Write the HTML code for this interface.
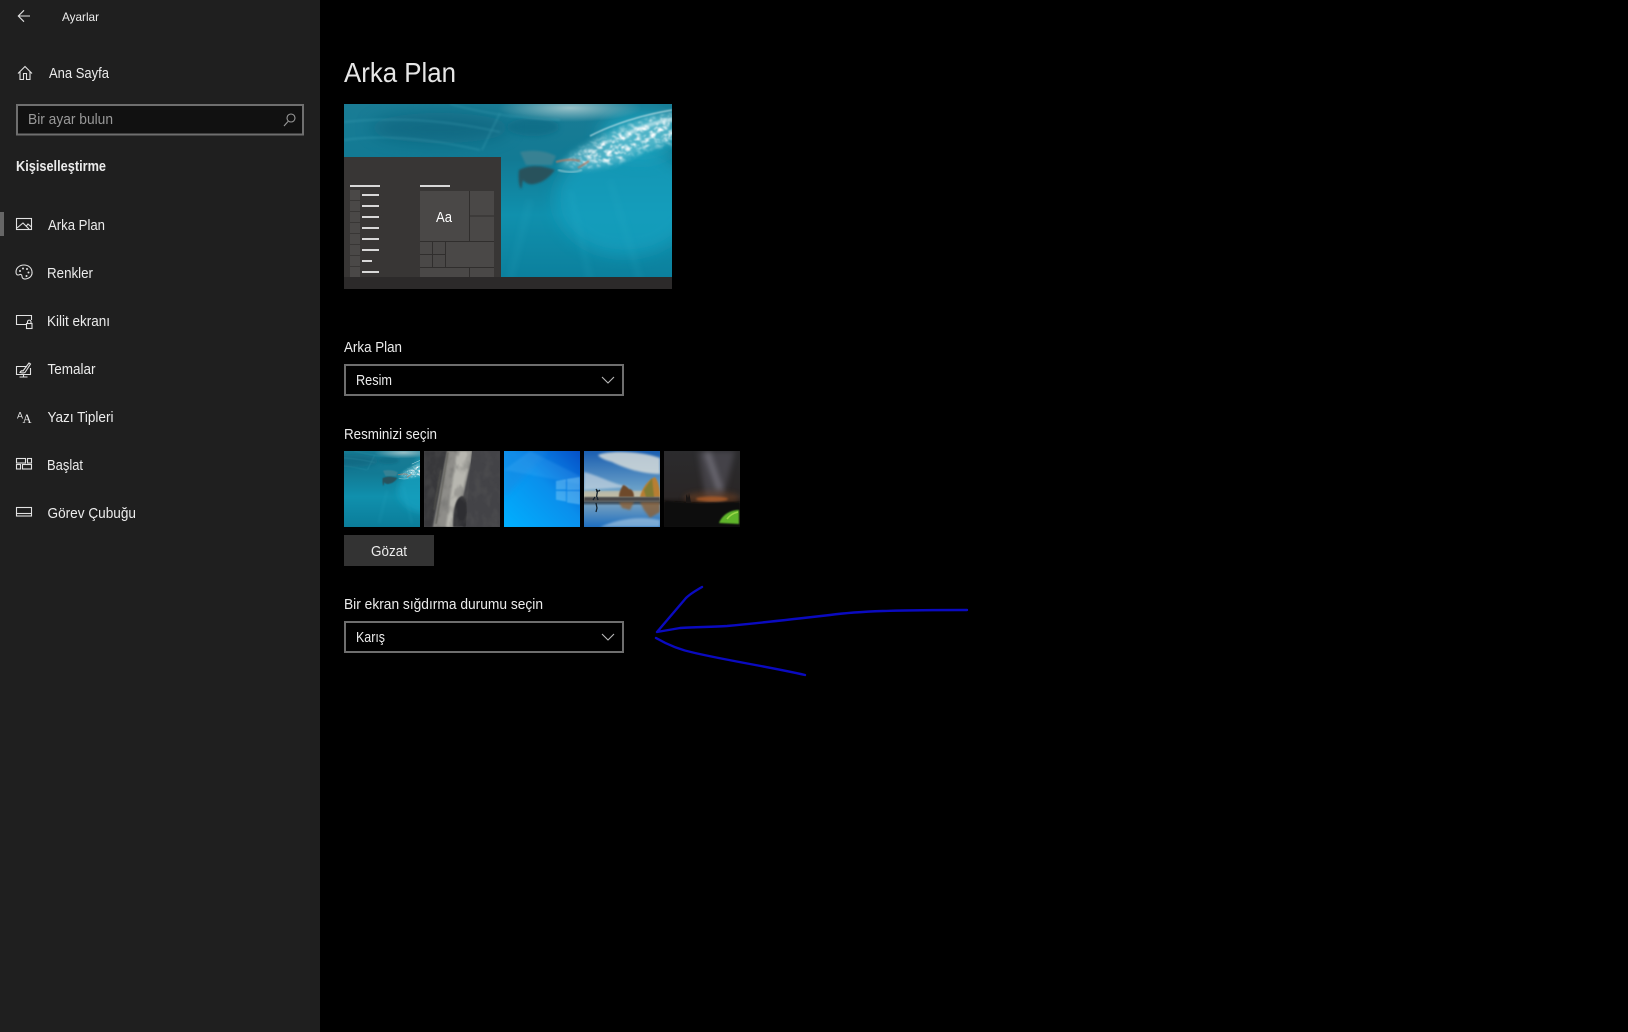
<!DOCTYPE html>
<html lang="tr"><head><meta charset="utf-8"><title>Ayarlar</title>
<style>
html,body{margin:0;padding:0;background:#000;width:1628px;height:1032px;overflow:hidden}
svg{display:block}
text{font-family:"Liberation Sans",sans-serif;fill:#ececec;font-size:14.5px}
.i{fill:none;stroke:#e2e2e2;stroke-width:1.1}
</style></head><body>
<svg width="1628" height="1032" viewBox="0 0 1628 1032" xmlns="http://www.w3.org/2000/svg">
<defs>
<linearGradient id="wb" x1="0" y1="0" x2="0" y2="1"><stop offset="0" stop-color="#1a7c95"/><stop offset=".3" stop-color="#127a94"/><stop offset=".6" stop-color="#1090ad"/><stop offset="1" stop-color="#0b7d9a"/></linearGradient>
<radialGradient id="wl" cx=".5" cy=".5" r=".5"><stop offset="0" stop-color="#a4c8cd" stop-opacity=".9"/><stop offset="1" stop-color="#a4c8cd" stop-opacity="0"/></radialGradient>
<linearGradient id="b3" x1="0" y1="1" x2="1" y2="0"><stop offset="0" stop-color="#00b0ff"/><stop offset=".55" stop-color="#0a8fec"/><stop offset="1" stop-color="#0550c8"/></linearGradient>
<linearGradient id="s4" x1="0" y1="0" x2="0" y2="1"><stop offset="0" stop-color="#1a5eb0"/><stop offset=".5" stop-color="#6aa0c8"/><stop offset=".62" stop-color="#b8b8a8"/><stop offset=".68" stop-color="#3a4a58"/><stop offset=".72" stop-color="#6f9cc0"/><stop offset="1" stop-color="#1e6fc0"/></linearGradient>
<linearGradient id="s5" x1="0" y1="0" x2="0" y2="1"><stop offset="0" stop-color="#2b2b2d"/><stop offset=".6" stop-color="#2a2626"/><stop offset=".72" stop-color="#140f0d"/><stop offset="1" stop-color="#060606"/></linearGradient>
<filter id="b1" x="-30%" y="-30%" width="160%" height="160%"><feGaussianBlur stdDeviation="1"/></filter>
<filter id="b2" x="-50%" y="-50%" width="200%" height="200%"><feGaussianBlur stdDeviation="3"/></filter>
<filter id="b8" x="-50%" y="-50%" width="200%" height="200%"><feGaussianBlur stdDeviation="8"/></filter>
<filter id="bs" x="-50%" y="-50%" width="200%" height="200%"><feGaussianBlur stdDeviation=".7"/></filter>
<filter id="foam" x="-10%" y="-10%" width="120%" height="120%"><feGaussianBlur in="SourceGraphic" stdDeviation="3" result="s"/><feTurbulence type="fractalNoise" baseFrequency=".16 .22" numOctaves="3" seed="7" result="n"/><feColorMatrix in="n" type="matrix" values="0 0 0 0 1 0 0 0 0 1 0 0 0 0 1 2.500 2.500 0 0 -2.300"/><feComposite in2="s" operator="in"/><feGaussianBlur stdDeviation=".8"/></filter>
<filter id="rock" x="0" y="0" width="100%" height="100%"><feTurbulence type="fractalNoise" baseFrequency=".12 .07" numOctaves="3" seed="3" result="n"/><feColorMatrix in="n" type="matrix" values="0 0 0 0 0.1 0 0 0 0 0.1 0 0 0 0 0.1 2.500 2.500 0 0 -2.300"/><feComposite in2="SourceGraphic" operator="in"/><feGaussianBlur stdDeviation=".6"/></filter>
<g id="wall">
<rect x="344" y="104" width="328" height="185" fill="url(#wb)"/>
<ellipse cx="440" cy="128" rx="70" ry="15" fill="#0f5e78" opacity=".6" filter="url(#b8)"/>
<ellipse cx="533" cy="127" rx="26" ry="9" fill="#0f6a84" opacity=".7" filter="url(#b2)"/>
<ellipse cx="625" cy="200" rx="70" ry="55" fill="#16a3c2" opacity=".7" filter="url(#b8)"/>
<ellipse cx="640" cy="135" rx="40" ry="25" fill="#1ea8c2" opacity=".7" filter="url(#b8)"/>
<ellipse cx="570" cy="108" rx="72" ry="14" fill="url(#wl)"/>
<path d="M344 122Q420 114 500 132M344 140Q400 132 480 150M450 104Q500 118 560 120M500 113L482 150" stroke="#52b6c8" stroke-width="1.400" fill="none" opacity=".3" filter="url(#b1)"/>
<path d="M558 166Q580 145 610 133Q640 118 672 112V142Q640 150 620 162Q590 172 570 168Z" fill="#8fd3df" opacity=".45" filter="url(#b2)"/>
<path d="M566 162Q585 145 610 135Q640 120 675 114V142Q640 148 622 160Q590 170 572 165Z" fill="#fff" filter="url(#foam)"/>
<path d="M590 136Q625 118 672 110" stroke="#e6f5f8" stroke-width="1.300" fill="none" opacity=".7" filter="url(#bs)"/>
<path d="M625 135Q648 123 672 120" stroke="#f4fbfc" stroke-width="4" fill="none" opacity=".5" filter="url(#b1)"/>
<path d="M520 152Q540 148 556 156L552 165H526Z" fill="#7e8f92" opacity=".35" filter="url(#b1)"/>
<path d="M519 170C530 164 545 166 555 170C550 176 545 182 534 184C529 185 525 183 523 180C522 184 522 188 521 189C519 186 518 178 519 170Z" fill="#2e464d" opacity=".8" filter="url(#b1)"/>
<path d="M556 162Q570 158 580 161M578 168L589 161" stroke="#a97a68" stroke-width="2.200" fill="none" opacity=".8" filter="url(#bs)"/>
<path d="M558 170Q572 174 582 170" stroke="#a8d4da" stroke-width="2" fill="none" opacity=".6" filter="url(#bs)"/>
<path d="M530 200L510 280M570 190L590 280M610 180L640 280" stroke="#35b0c8" stroke-width="6" fill="none" opacity=".12" filter="url(#b2)"/>
</g>
<clipPath id="c1"><rect x="344" y="451" width="76" height="76"/></clipPath>
<clipPath id="c2"><rect x="424" y="451" width="76" height="76"/></clipPath>
<clipPath id="c3"><rect x="504" y="451" width="76" height="76"/></clipPath>
<clipPath id="c4"><rect x="584" y="451" width="76" height="76"/></clipPath>
<clipPath id="c5"><rect x="664" y="451" width="76" height="76"/></clipPath>
<clipPath id="cw"><rect x="344" y="104" width="328" height="185"/></clipPath>
</defs>

<!-- sidebar -->
<rect x="0" y="0" width="320" height="1032" fill="#1f1f1f"/>
<path class="i" d="M30 16H18.500M24 10.300L18.300 16l5.700 5.700"/>
<text x="62" y="21" style="font-size:12px" textLength="37" lengthAdjust="spacingAndGlyphs">Ayarlar</text>
<path class="i" d="M18 73.500L25 66.500l7 7M20 71.500V79.500H23.500V73.500H26.500V79.500H30V71.500"/>
<text x="49" y="78" textLength="60" lengthAdjust="spacingAndGlyphs">Ana Sayfa</text>
<rect x="17" y="105" width="286" height="29.500" fill="#111" stroke="#6f6f6f" stroke-width="2"/>
<text x="28" y="124" textLength="85" lengthAdjust="spacingAndGlyphs" style="fill:#999">Bir ayar bulun</text>
<circle cx="291" cy="118" r="4" class="i" style="stroke:#999"/>
<path d="M288 121.500L284 126" class="i" style="stroke:#999"/>
<text x="16" y="171" textLength="90" lengthAdjust="spacingAndGlyphs" style="font-weight:700">Kişiselleştirme</text>

<rect x="0" y="212" width="4" height="24" fill="#666"/>
<rect class="i" x="16.500" y="218.500" width="15" height="11"/>
<path class="i" d="M17 228l6-5 6 6M26 226.500l2-2.500 3.500 3"/>
<text x="48" y="230" textLength="57" lengthAdjust="spacingAndGlyphs">Arka Plan</text>

<path class="i" d="M24 265c-4.500 0-8 3-8 7 0 2 1 3 2 3s2-.8 3-.5c1.500.5.5 2 1.500 3.500 1 1.200 3 1.200 5 .5 3.500-1 5-4 4.500-7C31.500 267.500 28 265 24 265Z"/>
<g fill="#e2e2e2"><circle cx="20" cy="271" r="1"/><circle cx="23" cy="268.500" r="1"/><circle cx="27" cy="269" r="1"/><circle cx="28.500" cy="272.500" r="1"/><circle cx="26.500" cy="276" r="1"/></g>
<text x="47" y="278" textLength="46" lengthAdjust="spacingAndGlyphs">Renkler</text>

<path class="i" d="M26 324.500H16.500V315.500H31.500V320"/>
<rect class="i" x="26.500" y="323.500" width="5.500" height="5"/>
<path class="i" d="M27.500 323.500V321.500a1.800 1.800 0 0 1 3.500 0V323.500"/>
<text x="47" y="326" textLength="63" lengthAdjust="spacingAndGlyphs">Kilit ekranı</text>

<path class="i" d="M27 366.500H16.500V374.500H30.500V368M23.500 374.500V377M19.500 377H27.500"/>
<path class="i" d="M20 372.500c1-2 2-2 3-1.500l6-8 1.500 1-5.500 8.500c-1 .5-3 .5-5 0Z"/>
<text x="47.500" y="374" textLength="48" lengthAdjust="spacingAndGlyphs">Temalar</text>

<text x="17" y="418.500" style="font-size:9px">A</text>
<text x="22.500" y="423" style="font-size:12.500px;font-family:'Liberation Serif',serif">A</text>
<text x="47.500" y="422" textLength="66" lengthAdjust="spacingAndGlyphs">Yazı Tipleri</text>

<g class="i"><rect x="16.500" y="458.500" width="9" height="4.500"/><rect x="27.500" y="458.500" width="4" height="4.500"/><rect x="16.500" y="464.500" width="4" height="4.500"/><rect x="22.500" y="464.500" width="9" height="4.500"/></g>
<text x="47" y="470" textLength="36" lengthAdjust="spacingAndGlyphs">Başlat</text>

<rect class="i" x="16.500" y="507.500" width="15" height="8.500"/>
<path class="i" d="M16.500 513.500H31.500"/>
<text x="47.500" y="518" textLength="88.500" lengthAdjust="spacingAndGlyphs">Görev Çubuğu</text>

<!-- main -->
<text x="344" y="82" textLength="112" lengthAdjust="spacingAndGlyphs" style="font-size:28px;fill:#e6e6e6">Arka Plan</text>

<g clip-path="url(#cw)"><use href="#wall"/></g>
<rect x="344" y="157" width="157" height="120" fill="#383635"/>
<rect x="344" y="277" width="328" height="12" fill="#2c2a2a"/>
<rect x="350" y="185" width="30" height="2" fill="#d8d8d8"/>
<rect x="420" y="185" width="30" height="2" fill="#d8d8d8"/>
<g fill="#4a4847"><rect x="350" y="190" width="10" height="10"/><rect x="350" y="201" width="10" height="10"/><rect x="350" y="212" width="10" height="10"/><rect x="350" y="223" width="10" height="10"/><rect x="350" y="234" width="10" height="10"/><rect x="350" y="245" width="10" height="10"/><rect x="350" y="256" width="10" height="10"/><rect x="350" y="267" width="10" height="10"/></g>
<g fill="#d8d8d8"><rect x="362" y="194" width="17" height="2"/><rect x="362" y="205" width="17" height="2"/><rect x="362" y="216" width="17" height="2"/><rect x="362" y="227" width="17" height="2"/><rect x="362" y="238" width="17" height="2"/><rect x="362" y="249" width="17" height="2"/><rect x="362" y="260" width="10" height="2"/><rect x="362" y="271" width="17" height="2"/></g>
<rect x="420" y="191" width="74" height="86" fill="#4a4847"/>
<path d="M469.500 191V241M469.500 216H494M420 241.500H494M432.500 241.500V267M445.500 241.500V267M420 254.500H445.500M420 267.500H494M469.500 267.500V277" stroke="#302e2d" stroke-width="1" fill="none"/>
<text x="436" y="222" textLength="16" lengthAdjust="spacingAndGlyphs" style="fill:#fff">Aa</text>

<text x="344" y="352" textLength="58" lengthAdjust="spacingAndGlyphs">Arka Plan</text>
<rect x="345" y="365" width="278" height="30" fill="#000" stroke="#6e6e6e" stroke-width="2"/>
<text x="356" y="385" textLength="36" lengthAdjust="spacingAndGlyphs">Resim</text>
<path class="i" d="M602 377l6 6 6-6" style="stroke:#b8b8b8"/>

<text x="344" y="439" textLength="93" lengthAdjust="spacingAndGlyphs">Resminizi seçin</text>

<!-- thumbs -->
<g clip-path="url(#c1)"><use href="#wall" transform="translate(344 451) scale(.411) translate(-425 -104)"/></g>

<g clip-path="url(#c2)">
<rect x="424" y="451" width="76" height="76" fill="#48484b"/>
<path d="M424 451H447L432 527H424Z" fill="#38383b" filter="url(#b1)"/>
<path d="M447 451H473L463 497V527H433Z" fill="#8e8d89" filter="url(#bs)"/>
<path d="M457 451H472L462 494L454 527H446Z" fill="#b8b7b0" filter="url(#b1)"/>
<path d="M448 452L436 524M441 470L434 510" stroke="#55554f" stroke-width="1.500" fill="none" opacity=".8" filter="url(#bs)"/>
<path d="M453 527C453 508 456 497 462 496C467 496 468 510 466 527Z" fill="#2f2f31" filter="url(#bs)"/>
<path d="M472 451H500V527H466L468 497Z" fill="#434347"/>
<rect x="424" y="451" width="76" height="76" fill="#000" opacity=".3" filter="url(#rock)"/>
</g>

<g clip-path="url(#c3)">
<rect x="504" y="451" width="76" height="76" fill="url(#b3)"/>
<path d="M504 451H548L504 498Z" fill="#1f86df" opacity=".45" filter="url(#b2)"/>
<path d="M530 451L580 476V484L504 470Z" fill="#6fc8ff" opacity=".14" filter="url(#b1)"/>
<path d="M556 481l10-1.700v10.200H556ZM567 479L580 477V490H567ZM556 491h10v10.500l-10-1.700ZM567 491H580V504.500l-13-2Z" fill="#8ad4fa" opacity=".42" filter="url(#bs)"/>
</g>

<g clip-path="url(#c4)">
<rect x="584" y="451" width="76" height="76" fill="url(#s4)"/>
<path d="M598 455C610 450 640 451 660 458V474C640 474 622 467 612 462C605 460 600 458 598 455Z" fill="#e0e2dc" opacity=".8" filter="url(#b1)"/>
<path d="M584 472C600 476 612 484 630 487L584 490Z" fill="#d8dfe4" opacity=".6" filter="url(#b1)"/>
<path d="M584 491H660V497H584Z" fill="#d2c2a0" opacity=".65" filter="url(#bs)"/>
<path d="M619 497C619 492 621 489 623 485C625 485 627 487 629 489C632 489 634 492 634 497Z" fill="#6e4a2c" filter="url(#bs)"/>
<path d="M640 497C642 488 648 480 655 477C658 481 660 487 660 497Z" fill="#b87e30" filter="url(#bs)"/>
<path d="M644 490L652 478L654 497H646Z" fill="#6a7a30" opacity=".7" filter="url(#bs)"/>
<rect x="584" y="497" width="76" height="4" fill="#4c4a48" filter="url(#bs)"/>
<path d="M619 502H634L630 510L622 508ZM640 502H660V512L650 518L644 510Z" fill="#8a5e34" opacity=".8" filter="url(#b1)"/>
<path d="M596 489l1.500 2-1 6M596 491h3l1-1M595 497l-2 3M597 497l1 3" stroke="#15222c" stroke-width="1.300" fill="none"/>
<path d="M596 503l1 5-1 4" stroke="#15222c" stroke-width="1.300" fill="none"/>
<path d="M600 527Q630 514 660 520V527Z" fill="#bcd4e6" opacity=".55" filter="url(#b1)"/>
</g>

<g clip-path="url(#c5)">
<rect x="664" y="451" width="76" height="76" fill="url(#s5)"/>
<path d="M698 451H735L722 503H706Z" fill="#6a6874" opacity=".4" filter="url(#b2)"/>
<path d="M707 452L720 490" stroke="#a8a6b4" stroke-width="6" opacity=".4" filter="url(#b2)" fill="none"/>
<ellipse cx="712" cy="499" rx="16" ry="2.500" fill="#e8762a" opacity=".75" filter="url(#b1)"/>
<ellipse cx="712" cy="498" rx="28" ry="6" fill="#7a4524" opacity=".5" filter="url(#b2)"/>
<path d="M664 501L700 503L740 502V527H664Z" fill="#0a0908" filter="url(#bs)"/>
<path d="M686 503v-7l1-2 1 4 1-5 1 4 1 6Z" fill="#1a1615"/>
<path d="M719 523C722 515 730 510 739 510V524Z" fill="#5fb42a" filter="url(#bs)"/>
<path d="M727 519C730 515 734 513 738 512" stroke="#a8e050" stroke-width="1.500" fill="none" opacity=".8"/>
</g>

<rect x="344" y="535" width="90" height="31" fill="#333"/>
<text x="371" y="556" textLength="36" lengthAdjust="spacingAndGlyphs">Gözat</text>

<text x="344" y="609" textLength="199" lengthAdjust="spacingAndGlyphs">Bir ekran sığdırma durumu seçin</text>
<rect x="345" y="622" width="278" height="30" fill="#000" stroke="#6e6e6e" stroke-width="2"/>
<text x="356" y="642" textLength="29" lengthAdjust="spacingAndGlyphs">Karış</text>
<path class="i" d="M602 634l6 6 6-6" style="stroke:#b8b8b8"/>

<!-- hand-drawn arrow -->
<g fill="none" stroke="#0a0ac0" stroke-width="2.400" stroke-linecap="round" stroke-linejoin="round">
<path d="M702 587C695 591 690 594 686 598L657 632L680 628C695 627 712 627 727 626C760 623 795 619 830 615C860 611 895 610 967 610"/>
<path d="M656 638C668 645 680 650 695 653C730 661 770 667 805 675"/>
</g>
</svg>
</body></html>
